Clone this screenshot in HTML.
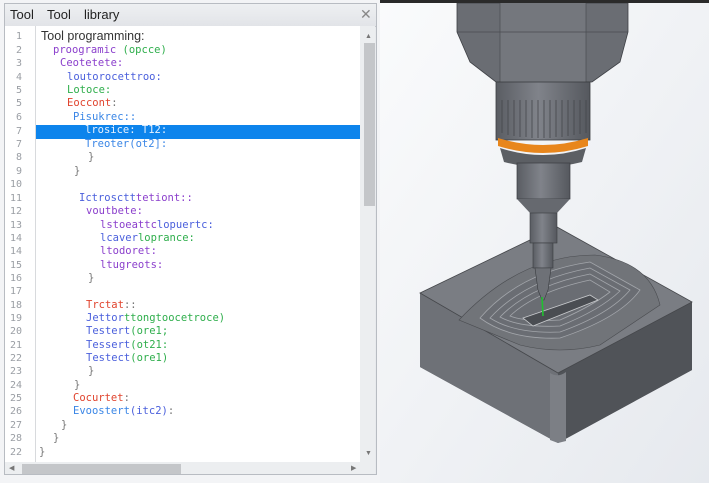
<!DOCTYPE html>
<html><head><meta charset="utf-8"><style>
html,body{margin:0;padding:0;width:709px;height:483px;overflow:hidden;background:#f3f4f6;font-family:"Liberation Sans",sans-serif}
#win{position:absolute;left:4px;top:3px;width:373px;height:472px;border:1px solid #b8bcc2;background:#e8eaed;box-sizing:border-box}
#title{position:absolute;left:0;top:0;width:100%;height:22px;background:linear-gradient(#eef0f2,#e2e4e8);border-bottom:1px solid #c4c7cc}
#title span{position:absolute;top:3px;font-size:13px;color:#222}
#code{position:absolute;left:1px;top:23px;width:355px;height:436px;background:#fff}
#gut{position:absolute;left:30px;top:0;width:1px;height:436px;background:#d8dadd}
.ln{position:absolute;width:22px;text-align:right;left:0;font-family:"DejaVu Sans Mono",monospace;font-size:10px;color:#9a9ea4}
.c{position:absolute;font-family:"DejaVu Sans Mono",monospace;font-size:10.5px;white-space:pre}
.pu{color:#8b3fcc}.gr{color:#2fae4c}.bl{color:#4a5fdc}.rd{color:#e0442e}.lb{color:#3a86e6}.br{color:#777}
#hl{position:absolute;left:31px;top:99px;width:325px;height:14px;background:#0d84ec}
#vs{position:absolute;left:356px;top:23px;width:15px;height:436px;background:#eceef0}
#vt{position:absolute;left:360px;top:40px;width:11px;height:163px;background:#c4c6c9}
#hs{position:absolute;left:1px;top:459px;width:370px;height:12px;background:#eceef0}
#ht{position:absolute;left:18px;top:461px;width:159px;height:10px;background:#c4c6c9}
</style></head><body>
<div id="win">
<div id="title"><span style="left:5px">Tool</span><span style="left:42px">Tool</span><span style="left:79px">library</span><span style="left:355px;color:#888;font-size:14px;top:2px">✕</span></div>
</div>
<div style="position:absolute;left:4px;top:3px;width:373px;height:472px">
<div id="code">
<div id="hl"></div>
<div id="gut"></div>
</div>
<div id="vs"></div><div id="vt"></div>
<div style="position:absolute;left:361px;top:30px;font-size:7px;color:#777">▲</div>
<div style="position:absolute;left:361px;top:447px;font-size:7px;color:#777">▼</div>
<div id="hs"></div><div id="ht"></div>
<div style="position:absolute;left:5px;top:461px;font-size:7px;color:#777">◀</div>
<div style="position:absolute;left:347px;top:461px;font-size:7px;color:#777">▶</div>
</div>
<div style="position:absolute;left:0;top:0">
<div class="ln" style="top:31px">1</div><div class="c" style="left:41px;top:29px;color:#333;font-family:'Liberation Sans',sans-serif;font-size:12.5px">Tool programming:</div>
<div class="ln" style="top:45px">2</div><div class="c pu" style="left:53px;top:44px">proogramic<span class="gr"> (opcce)</span></div>
<div class="ln" style="top:58px">3</div><div class="c pu" style="left:60px;top:57px">Ceotetete:</div>
<div class="ln" style="top:72px">4</div><div class="c bl" style="left:67px;top:71px">loutorocettroo:</div>
<div class="ln" style="top:85px">5</div><div class="c gr" style="left:67px;top:84px">Lotoce:</div>
<div class="ln" style="top:98px">5</div><div class="c rd" style="left:67px;top:97px">Eoccont<span class="br">:</span></div>
<div class="ln" style="top:112px">6</div><div class="c lb" style="left:73px;top:111px">Pisukrec::</div>
<div class="ln" style="top:126px">7</div><div class="c" style="left:85px;top:124px;color:#e8f2ff">lrosice: T12:</div>
<div class="ln" style="top:139px">7</div><div class="c lb" style="left:85px;top:138px">Treoter(ot2]:</div>
<div class="ln" style="top:152px">8</div><div class="c br" style="left:88px;top:151px">}</div>
<div class="ln" style="top:166px">9</div><div class="c br" style="left:74px;top:165px">}</div>
<div class="ln" style="top:179px">10</div>
<div class="ln" style="top:193px">11</div><div class="c bl" style="left:79px;top:192px">Ictrosctt<span class="pu">tetiont::</span></div>
<div class="ln" style="top:206px">12</div><div class="c pu" style="left:86px;top:205px">voutbete:</div>
<div class="ln" style="top:220px">13</div><div class="c pu" style="left:100px;top:219px">lstoeattc<span class="bl">lopuertc:</span></div>
<div class="ln" style="top:233px">14</div><div class="c bl" style="left:100px;top:232px">lcaver<span class="gr">loprance:</span></div>
<div class="ln" style="top:246px">14</div><div class="c pu" style="left:100px;top:245px">ltodoret:</div>
<div class="ln" style="top:260px">15</div><div class="c pu" style="left:100px;top:259px">ltugreots:</div>
<div class="ln" style="top:273px">16</div><div class="c br" style="left:88px;top:272px">}</div>
<div class="ln" style="top:286px">17</div>
<div class="ln" style="top:300px">18</div><div class="c rd" style="left:86px;top:299px">Trctat<span class="br">::</span></div>
<div class="ln" style="top:313px">19</div><div class="c bl" style="left:86px;top:312px">Jettor<span class="gr">ttongtoocetroce)</span></div>
<div class="ln" style="top:326px">20</div><div class="c bl" style="left:86px;top:325px">Testert<span class="gr">(ore1;</span></div>
<div class="ln" style="top:340px">21</div><div class="c bl" style="left:86px;top:339px">Tessert<span class="gr">(ot21:</span></div>
<div class="ln" style="top:353px">22</div><div class="c bl" style="left:86px;top:352px">Testect<span class="gr">(ore1)</span></div>
<div class="ln" style="top:366px">23</div><div class="c br" style="left:88px;top:365px">}</div>
<div class="ln" style="top:380px">24</div><div class="c br" style="left:74px;top:379px">}</div>
<div class="ln" style="top:393px">25</div><div class="c rd" style="left:73px;top:392px">Cocurtet<span class="br">:</span></div>
<div class="ln" style="top:406px">26</div><div class="c lb" style="left:73px;top:405px">Evoostert<span class="bl">(itc2)</span><span class="br">:</span></div>
<div class="ln" style="top:420px">27</div><div class="c br" style="left:61px;top:419px">}</div>
<div class="ln" style="top:433px">28</div><div class="c br" style="left:53px;top:432px">}</div>
<div class="ln" style="top:447px">22</div><div class="c br" style="left:39px;top:446px">}</div>
</div>
<svg style="position:absolute;left:380px;top:0" width="329" height="483" viewBox="380 0 329 483">
<defs>
<linearGradient id="bg" x1="0" y1="0" x2="1" y2="1"><stop offset="0" stop-color="#fafbfc"/><stop offset="1" stop-color="#e6e9ee"/></linearGradient>
<linearGradient id="met" x1="0" x2="1"><stop offset="0" stop-color="#5a5d63"/><stop offset=".45" stop-color="#80838a"/><stop offset="1" stop-color="#55585e"/></linearGradient>
</defs>
<rect x="380" y="0" width="329" height="483" fill="url(#bg)"/>
<!-- block -->
<path d="M420 293 L420 367 L558 443 L692 370 L692 302 Z" fill="#5e6167"/>
<path d="M420 293 L420 367 L558 443 L558 373 Z" fill="#6e7177"/>
<path d="M558 373 L692 302 L692 370 L558 443 Z" fill="#505358"/>
<path d="M550 373 Q558 378 566 372 L566 441 L558 443 L550 440 Z" fill="#7c7f85"/>
<path d="M420 293 L557 227 L692 302 L558 373 Z" fill="#7a7d83" stroke="#45474b" stroke-width=".8"/>
<path d="M459 320 Q520 255 595 255 Q650 262 660 305 L600 345 Q560 355 520 345 Z" fill="#717479" stroke="#4a4c50" stroke-width=".6"/>
<g fill="none" stroke="#a3a6ab" stroke-width=".8">
<path d="M480 318 Q520 272 590 262 L640 290 Q620 318 560 338 Q510 340 480 318 Z" fill="#6a6d73"/>
<path d="M490 318 Q525 280 590 268 L630 290 Q610 314 560 332 Q515 334 490 318 Z"/>
<path d="M500 317 Q530 286 590 274 L620 291 Q600 310 560 326 Q520 328 500 317 Z"/>
<path d="M510 316 Q535 292 590 280 L610 292 Q592 306 560 320 Q525 322 510 316 Z"/>
</g>
<path d="M523 318 L590 295 L598 300 L533 326 Z" fill="#4a4d52" stroke="#c8cacd" stroke-width=".8"/>
<!-- spindle head -->
<path d="M457 3 L628 3 L628 32 L620 62 L592 82 L496 82 L470 62 L457 32 Z" fill="#6a6d73" stroke="#3e4045" stroke-width=".8"/>
<rect x="500" y="3" width="86" height="79" fill="#74777d"/>
<path d="M500 3 L500 82 M586 3 L586 82 M457 32 L628 32" stroke="#4a4c51" stroke-width=".7" fill="none"/>
<rect x="380" y="0" width="329" height="3" fill="#2a2a2a"/>
<!-- collet nut -->
<rect x="496" y="82" width="94" height="58" fill="url(#met)" stroke="#3a3c40" stroke-width=".8"/>
<g stroke="#45474c" stroke-width=".8">
<path d="M502 100 V133 M508 100 V135 M514 100 V136 M520 100 V137 M526 100 V137 M532 100 V138 M538 100 V138 M544 100 V138 M550 100 V138 M556 100 V137 M562 100 V137 M568 100 V136 M574 100 V135 M580 100 V134 M586 100 V133"/>
</g>
<path d="M498 138 Q543 152 588 138 L588 146 Q543 160 498 146 Z" fill="#e8861c"/>
<path d="M500 148 Q543 162 586 148 L582 162 Q543 172 504 162 Z" fill="#5c5f64"/>
<!-- lower shaft -->
<rect x="517" y="163" width="53" height="36" fill="url(#met)" stroke="#3a3c40" stroke-width=".7"/>
<path d="M517 199 L570 199 L557 213 L530 213 Z" fill="#66696f"/>
<rect x="530" y="213" width="27" height="30" fill="url(#met)" stroke="#3a3c40" stroke-width=".6"/>
<rect x="533" y="243" width="20" height="25" fill="url(#met)" stroke="#3a3c40" stroke-width=".6"/>
<path d="M535 268 L551 268 L548 290 L544 300 L542 300 L538 290 Z" fill="#6e7177" stroke="#3a3c40" stroke-width=".6"/>
<line x1="542" y1="297" x2="543" y2="316" stroke="#20c030" stroke-width="1.6"/>
</svg>
</body></html>
